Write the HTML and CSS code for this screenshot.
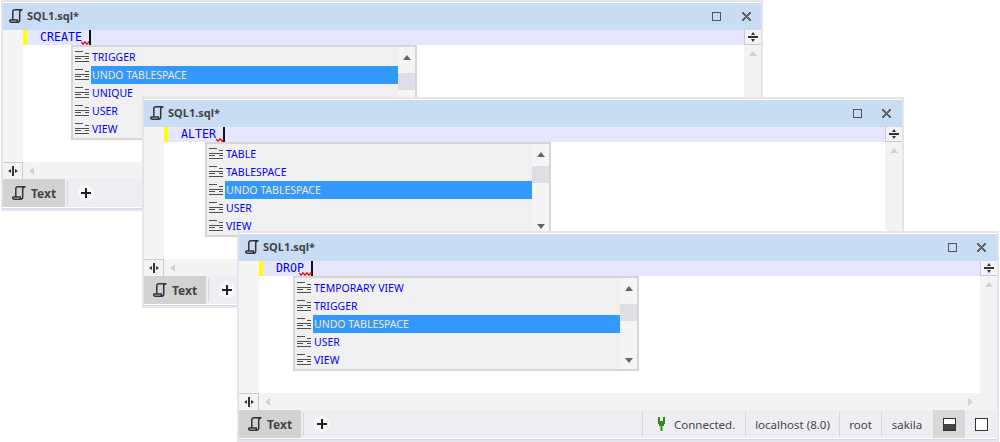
FILE: index.html
```html
<!DOCTYPE html>
<html lang="en">
<head>
<meta charset="utf-8">
<title>SQL editors</title>
<link rel="stylesheet" href="styles.css">
</head>
<body>
<svg class="defs" width="0" height="0" aria-hidden="true">
  <symbol id="doc" viewBox="0 0 14 14">
    <path d="M3.800 11V3C3.800 1.600 4.500.8 6 .8h7.500M13.500.8c-1.800 0-2.800.9-2.800 2.400V11c0 1.300-.7 2.200-2 2.200H2.300C1.200 13.200.7 12.500.7 11.800c0-.5.300-.8.800-.8h6.800v1.500" fill="none" stroke="#333" stroke-width="1.500"/>
  </symbol>
  <symbol id="lst" viewBox="0 0 14 14">
    <path d="M0 1.500h8M10 3.500h4M0 6.500h14M0 8.500h6M10 8.500h4M0 11.500h14" stroke="#505050" stroke-width="1" fill="none"/>
  </symbol>
  <symbol id="wave" viewBox="0 0 16 4">
    <path d="M0 .8l2 2.400 2-2.400 2 2.400 2-2.400 2 2.400 2-2.400 2 2.400 2-2.400" stroke="#e00000" stroke-width="1.200" fill="none"/>
  </symbol>
</svg>

<section class="win win-a">
  <header class="title"><svg class="doc"><use href="#doc"/></svg><b>SQL1.sql*</b><span class="fill"></span><i class="max"></i><i class="close"></i></header>
  <div class="main">
    <div class="gutter"></div>
    <div class="code">
      <div class="line"><i class="mark"></i><span class="kw">CREATE<svg class="squig sq-a"><use href="#wave" width="16" height="4"/></svg></span><i class="caret"></i></div>
    </div>
    <div class="vbar"><div class="split"><i class="up"></i><i class="bar"></i><i class="down"></i></div><i class="tri-up"></i></div>
  </div>
  <div class="hbar"><div class="hsplit"><i class="lt"></i><i class="vline"></i><i class="rt"></i></div><i class="tri-left"></i><span class="fill"></span><i class="tri-right"></i></div>
  <footer class="tabs">
    <div class="tab"><svg class="doc"><use href="#doc"/></svg><b>Text</b></div><i class="sep"></i><div class="plus"></div>
  </footer>
  <div class="pop pop-a">
    <ul class="items">
      <li><svg class="lst"><use href="#lst"/></svg><span>TRIGGER</span></li>
      <li class="sel"><svg class="lst"><use href="#lst"/></svg><span>UNDO TABLESPACE</span></li>
      <li><svg class="lst"><use href="#lst"/></svg><span>UNIQUE</span></li>
      <li><svg class="lst"><use href="#lst"/></svg><span>USER</span></li>
      <li><svg class="lst"><use href="#lst"/></svg><span>VIEW</span></li>
    </ul>
    <div class="pbar"><i class="pup"></i><i class="thumb t-a"></i><span class="fill"></span><i class="pdown"></i></div>
  </div>
</section>

<section class="win win-b">
  <header class="title"><svg class="doc"><use href="#doc"/></svg><b>SQL1.sql*</b><span class="fill"></span><i class="max"></i><i class="close"></i></header>
  <div class="main">
    <div class="gutter"></div>
    <div class="code">
      <div class="line"><i class="mark"></i><span class="kw">ALTER<svg class="squig sq-b"><use href="#wave" width="16" height="4"/></svg></span><i class="caret"></i></div>
    </div>
    <div class="vbar"><div class="split"><i class="up"></i><i class="bar"></i><i class="down"></i></div><i class="tri-up"></i></div>
  </div>
  <div class="hbar"><div class="hsplit"><i class="lt"></i><i class="vline"></i><i class="rt"></i></div><i class="tri-left"></i><span class="fill"></span><i class="tri-right"></i></div>
  <footer class="tabs">
    <div class="tab"><svg class="doc"><use href="#doc"/></svg><b>Text</b></div><i class="sep"></i><div class="plus"></div>
  </footer>
  <div class="pop pop-b">
    <ul class="items">
      <li><svg class="lst"><use href="#lst"/></svg><span>TABLE</span></li>
      <li><svg class="lst"><use href="#lst"/></svg><span>TABLESPACE</span></li>
      <li class="sel"><svg class="lst"><use href="#lst"/></svg><span>UNDO TABLESPACE</span></li>
      <li><svg class="lst"><use href="#lst"/></svg><span>USER</span></li>
      <li><svg class="lst"><use href="#lst"/></svg><span>VIEW</span></li>
    </ul>
    <div class="pbar"><i class="pup"></i><i class="thumb t-b"></i><span class="fill"></span><i class="pdown"></i></div>
  </div>
</section>

<section class="win win-c">
  <header class="title"><svg class="doc"><use href="#doc"/></svg><b>SQL1.sql*</b><span class="fill"></span><i class="max"></i><i class="close"></i></header>
  <div class="main">
    <div class="gutter"></div>
    <div class="code">
      <div class="line"><i class="mark"></i><span class="kw">DROP<svg class="squig sq-c"><use href="#wave" width="16" height="4"/></svg></span><i class="caret"></i></div>
    </div>
    <div class="vbar"><div class="split"><i class="up"></i><i class="bar"></i><i class="down"></i></div><i class="tri-up"></i></div>
  </div>
  <div class="hbar"><div class="hsplit"><i class="lt"></i><i class="vline"></i><i class="rt"></i></div><i class="tri-left"></i><span class="fill"></span><i class="tri-right"></i></div>
  <footer class="tabs">
    <div class="tab"><svg class="doc"><use href="#doc"/></svg><b>Text</b></div><i class="sep"></i><div class="plus"></div>
    <span class="fill"></span>
    <div class="stat st-conn">
      <svg class="plug" viewBox="0 0 7 14"><path d="M0 0h2v4h3V0h2v7H6v2H4.500v5h-2V9H1V7H0z" fill="#2e8b1e"/></svg>
      <span>Connected.</span>
    </div>
    <div class="stat st-host">localhost (8.0)</div>
    <div class="stat st-user">root</div>
    <div class="stat st-db">sakila</div>
    <div class="pane on"><i class="half"></i></div>
    <div class="pane"><i class="box"></i></div>
  </footer>
  <div class="pop pop-c">
    <ul class="items">
      <li><svg class="lst"><use href="#lst"/></svg><span>TEMPORARY VIEW</span></li>
      <li><svg class="lst"><use href="#lst"/></svg><span>TRIGGER</span></li>
      <li class="sel"><svg class="lst"><use href="#lst"/></svg><span>UNDO TABLESPACE</span></li>
      <li><svg class="lst"><use href="#lst"/></svg><span>USER</span></li>
      <li><svg class="lst"><use href="#lst"/></svg><span>VIEW</span></li>
    </ul>
    <div class="pbar"><i class="pup"></i><i class="thumb t-c"></i><span class="fill"></span><i class="pdown"></i></div>
  </div>
</section>
</body>
</html>
```
FILE: styles.css
```css
* { box-sizing: border-box; }
html, body { margin: 0; padding: 0; }
body {
  position: relative;
  width: 1000px;
  height: 442px;
  overflow: hidden;
  background: #fff;
  font-family: "Noto Sans", "Open Sans", sans-serif;
  font-size: 11px;
  color: #333;
}
i { display: block; font-style: normal; }
.defs { position: absolute; }
.fill { flex: 1; }

.win {
  position: absolute;
  display: flex;
  flex-direction: column;
  background: #fff;
  border: 2px solid #e4e4ec;
  padding: 1px 0 2px;
  width: 762px;
  height: 211px;
  box-shadow: inset 0 -1px 0 #d4d4e2;
}
.win-a { left: 1px; top: 0; }
.win-b { left: 142px; top: 97px; }
.win-c { left: 237px; top: 231px; }

.title {
  display: flex;
  align-items: center;
  height: 27px;
  flex: none;
  background: #c8dcf3;
  padding: 0 11px 2px 6px;
}
.title b { font-size: 11px; font-weight: 700; color: #444; margin-left: 4px; }
.doc { width: 14px; height: 14px; flex: none; }
.max { width: 9px; height: 9px; border: 1px solid #555; margin-right: 20px; margin-top: 2px; }
.close {
  width: 9px; height: 9px;
  margin-top: 2px;
  background:
    linear-gradient(45deg, transparent 44%, #666 44%, #666 56%, transparent 56%),
    linear-gradient(-45deg, transparent 44%, #666 44%, #666 56%, transparent 56%);
}
.win-a .title { padding-right: 10px; }
.win-a .max { margin-right: 21px; }

.main { flex: 1; display: flex; min-height: 0; }
.gutter { width: 20px; background: #f5f5f5; flex: none; }
.code { flex: 1; min-width: 0; }
.line {
  display: flex;
  align-items: stretch;
  height: 15px;
  background: #e6e6ff;
  font-family: "DejaVu Sans Mono", "Liberation Mono", monospace;
  font-size: 11.630px;
  line-height: 15px;
}
.mark { width: 4px; background: #ffff00; margin-right: 13px; }
.kw { position: relative; color: #0000ff; }
.squig {
  position: absolute;
  bottom: 0;
  height: 4px;
}
.sq-a { right: -7px; width: 8px; }
.sq-b { right: -8px; width: 8px; }
.sq-c { right: -8px; width: 13px; }
.caret { width: 2px; background: #111; margin-left: 7px; }

.vbar {
  width: 17px;
  flex: none;
  background: #f3f3f3;
  display: flex;
  flex-direction: column;
  align-items: center;
}
.split {
  width: 17px; height: 15px;
  background: #f3f3f3;
  border-left: 1px solid #c8c8d8;
  border-bottom: 1px solid #c8c8d8;
  display: flex;
  flex-direction: column;
  align-items: center;
  justify-content: center;
  gap: 1px;
}
.split .bar { width: 10px; height: 2px; background: #333; }
.split .up { border: 2px solid transparent; border-top: 0; border-bottom: 3px solid #333; }
.split .down { border: 2px solid transparent; border-bottom: 0; border-top: 3px solid #333; }
.tri-up { margin-top: 6px; border: 4px solid transparent; border-top: 0; border-bottom: 5px solid #d2d2d2; }

.hbar {
  flex: none;
  height: 17px;
  display: flex;
  align-items: center;
  background: #f3f3f3;
  padding-right: 24px;
}
.hsplit {
  width: 20px; height: 17px;
  border-top: 1px solid #c8c8d8;
  border-right: 1px solid #c8c8d8;
  display: flex;
  align-items: center;
  justify-content: center;
  gap: 1px;
}
.hsplit .vline { width: 2px; height: 10px; background: #333; }
.hsplit .lt { border: 2px solid transparent; border-left: 0; border-right: 3px solid #333; }
.hsplit .rt { border: 2px solid transparent; border-right: 0; border-left: 3px solid #333; }
.tri-left { margin-left: 6px; border: 4px solid transparent; border-left: 0; border-right: 5px solid #d2d2d2; }
.tri-right { border: 4px solid transparent; border-right: 0; border-left: 5px solid #d2d2d2; }

.tabs {
  flex: none;
  height: 28px;
  display: flex;
  align-items: center;
  background: #eeeef2;
  font-size: 11.500px;
}
.tab {
  width: 62px; height: 28px;
  background: #d2d2d2;
  display: flex;
  align-items: center;
  padding-left: 9px;
  gap: 5px;
}
.tab b { font-size: 12px; font-weight: 700; color: #444; }
.sep { width: 1px; height: 24px; background: #d6d6dc; margin-left: 2px; }
.plus {
  width: 16px; height: 16px;
  margin-left: 10px;
  background:
    linear-gradient(#222, #222) center / 10px 2px no-repeat,
    linear-gradient(#222, #222) center / 2px 10px no-repeat,
    radial-gradient(circle, #f8f8f8 70%, transparent 72%);
}

.stat {
  height: 24px;
  display: flex;
  align-items: center;
  border-left: 1px solid #d6d6dc;
  justify-content: center;
  color: #444;
}
.st-conn { width: 103px; gap: 9px; padding-left: 15px; justify-content: flex-start; }
.plug { width: 7px; height: 14px; flex: none; }
.st-host { width: 94px; }
.st-user { width: 42px; }
.st-db { width: 51px; }
.pane {
  width: 32px; height: 28px;
  display: flex;
  align-items: center;
  justify-content: center;
}
.pane.on { background: #d8d8d8; margin-left: 1px; }
.half, .box { width: 13px; height: 13px; border: 1px solid #333; background: #fff; }
.half { background: linear-gradient(#fff 50%, #444 50%); }

.pop {
  position: absolute;
  display: flex;
  width: 346px;
  height: 95px;
  background: #f0f0f0;
  border: 2px solid #d6d6d6;
  padding-top: 1px;
}
.pop-a { left: 68px; top: 43px; }
.pop-b { left: 61px; top: 43px; }
.pop-c { left: 54px; top: 43px; }
.items { flex: 1; list-style: none; margin: 0; padding: 0; min-width: 0; }
.items li {
  display: flex;
  align-items: center;
  height: 18px;
  padding-left: 2px;
  color: #0000ff;
  font-size: 10.500px;
}
.items span {
  flex: 1;
  height: 18px;
  line-height: 18px;
  padding-left: 1px;
  margin-left: 2px;
}
.items .sel span { background: #3399ff; color: #f3e6c8; }
.lst { width: 14px; height: 14px; flex: none; }

.pbar {
  width: 17px;
  flex: none;
  background: #f5f5f5;
  display: flex;
  flex-direction: column;
  align-items: center;
  margin-top: -1px;
}
.pup { margin-top: 8px; border: 4px solid transparent; border-top: 0; border-bottom: 5px solid #666; }
.pdown { margin-bottom: 6px; border: 4px solid transparent; border-bottom: 0; border-top: 5px solid #666; }
.thumb { width: 17px; height: 17px; background: #dedee4; }
.t-a { margin-top: 13px; }
.t-b { margin-top: 9px; }
.t-c { margin-top: 13px; }
```
